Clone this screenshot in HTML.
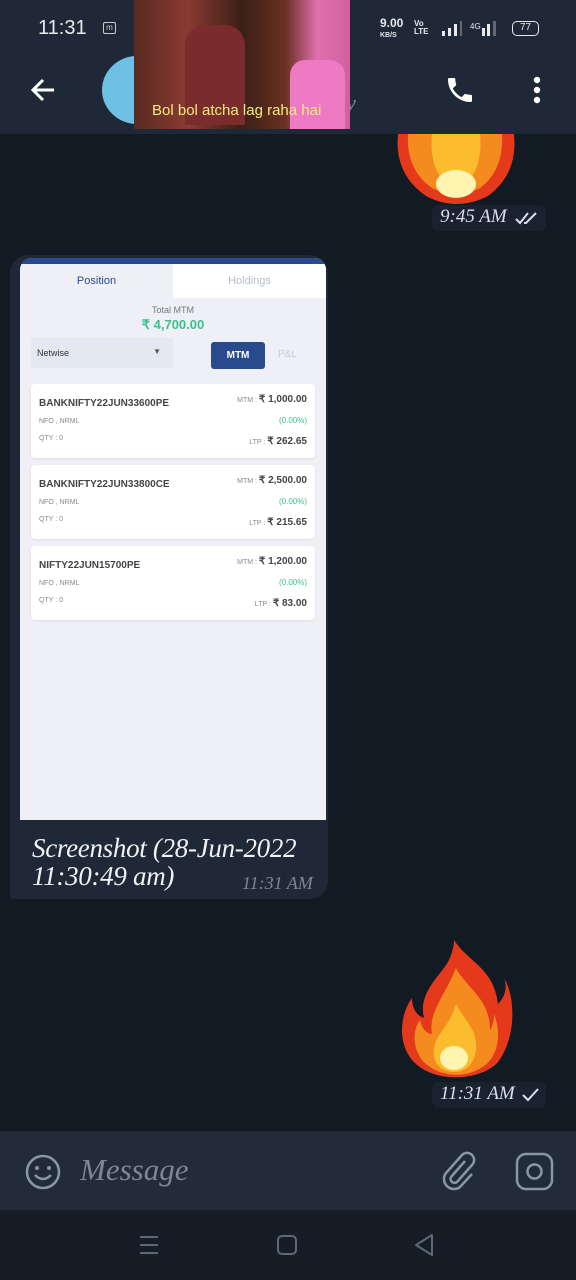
<!DOCTYPE html>
<html><head><style>
*{margin:0;padding:0;box-sizing:border-box}
body{width:576px;height:1280px;background:#121a24;font-family:"Liberation Sans",sans-serif;position:relative;overflow:hidden}
.abs{position:absolute}
.hdr{left:0;top:0;width:576px;height:134px;background:#1f2836}
.serif{font-family:"Liberation Serif",serif;font-style:italic}
.card{background:#fff;border-radius:4px;position:absolute;left:11px;width:284px;height:74px;box-shadow:0 1px 2px rgba(0,0,0,.08)}
.card .n{position:absolute;left:8px;top:14px;font-size:10px;font-weight:bold;color:#444}
.card .s{position:absolute;left:8px;font-size:7px;color:#888}
.card .r{position:absolute;right:8px;font-size:10px;font-weight:bold;color:#444;text-align:right}
.card .r small{font-size:7px;font-weight:normal;color:#888}
.card .g{position:absolute;right:8px;top:32px;font-size:8px;color:#3cc08c}
</style></head><body>
<div class="abs hdr"></div>
<div class="abs" style="left:38px;top:17px;color:#e8eaed;font-size:20px">11:31</div>
<div class="abs" style="left:103px;top:22px;width:13px;height:12px;border:1px solid #ccc;border-radius:2px;font-size:8px;color:#ccc;text-align:center;line-height:10px">m</div>
<div class="abs" style="left:380px;top:18px;color:#e8eaed;font-size:12px;font-weight:bold;line-height:10px">9.00<br><span style="font-size:7px">KB/S</span></div>
<div class="abs" style="left:414px;top:20px;color:#e8eaed;font-size:8px;font-weight:bold;line-height:8px">Vo<br>LTE</div>
<svg class="abs" style="left:440px;top:20px" width="60" height="18"><rect x="2" y="11" width="3" height="5" fill="#e8eaed"/><rect x="8" y="8" width="3" height="8" fill="#e8eaed"/><rect x="14" y="4" width="3" height="12" fill="#e8eaed"/><rect x="20" y="1" width="2" height="15" fill="#667"/><text x="30" y="9" font-size="8" fill="#e8eaed" font-family="Liberation Sans">4G</text><rect x="42" y="8" width="3" height="8" fill="#e8eaed"/><rect x="47" y="4" width="3" height="12" fill="#e8eaed"/><rect x="53" y="1" width="3" height="15" fill="#667"/></svg>
<div class="abs" style="left:512px;top:21px;width:27px;height:15px;border:1.5px solid #e8eaed;border-radius:5px;color:#e8eaed;font-size:10px;text-align:center;line-height:12px">77</div>
<svg class="abs" style="left:28px;top:76px" width="30" height="28"><path d="M26 14H5M15 4L5 14l10 10" stroke="#fff" stroke-width="3" fill="none"/></svg>
<div class="abs" style="left:102px;top:56px;width:70px;height:68px;border-radius:50%;background:#6ec1e4"></div>
<div class="abs serif" style="left:340px;top:90px;color:#7d8794;font-size:22px">ly</div>
<svg class="abs" style="left:444px;top:74px" width="32" height="32" viewBox="0 0 24 24"><path fill="#fff" d="M6.6 10.8c1.4 2.8 3.8 5.1 6.6 6.6l2.2-2.2c.3-.3.7-.4 1-.2 1.1.4 2.3.6 3.6.6.6 0 1 .4 1 1V20c0 .6-.4 1-1 1C10.6 21 3 13.4 3 4c0-.6.4-1 1-1h3.5c.6 0 1 .4 1 1 0 1.3.2 2.5.6 3.6.1.3 0 .7-.2 1z"/></svg>
<svg class="abs" style="left:530px;top:74px" width="14" height="32"><circle cx="7" cy="6" r="3.2" fill="#fff"/><circle cx="7" cy="16" r="3.2" fill="#fff"/><circle cx="7" cy="26" r="3.2" fill="#fff"/></svg>
<div class="abs" style="left:134px;top:0;width:216px;height:129px;background:linear-gradient(90deg,#5a2a22 0%,#8a3a30 25%,#3a2018 50%,#6a3020 70%,#e070b0 85%,#d060a0 100%)"></div>
<div class="abs" style="left:185px;top:25px;width:60px;height:100px;background:#7a2b2b;border-radius:20px 20px 0 0"></div>
<div class="abs" style="left:290px;top:60px;width:55px;height:69px;background:#ee7ac4;border-radius:15px 15px 0 0"></div>
<div class="abs" style="left:152px;top:102px;color:#f5eb80;font-size:15px">Bol bol atcha lag raha hai</div>
<svg class="abs" style="left:396px;top:134px" width="120" height="72" viewBox="0 0 120 72"><path d="M2 0Q-2 40 30 62Q60 78 92 62Q122 40 118 0Z" fill="#e5391b"/><path d="M12 0Q10 36 36 54Q60 66 84 54Q108 36 106 0Z" fill="#f58a1f"/><path d="M36 0Q32 40 60 58Q88 40 84 0Z" fill="#fbbd2e"/><ellipse cx="60" cy="50" rx="20" ry="14" fill="#fff4b0"/></svg>
<div class="abs" style="left:432px;top:205px;width:114px;height:26px;background:#1a2230;border-radius:6px"></div>
<div class="abs serif" style="left:440px;top:206px;color:#dde;font-size:19px">9:45 AM</div>
<svg class="abs" style="left:514px;top:210px" width="28" height="16"><path d="M2 9l4 4 8-10M10 13l2 0 10-10" stroke="#dde" stroke-width="2" fill="none"/></svg>
<div class="abs" style="left:10px;top:255px;width:318px;height:644px;background:#1f2836;border-radius:18px 18px 18px 4px"></div>
<div class="abs" style="left:20px;top:258px;width:306px;height:562px;background:#eef0f5;border-radius:12px 12px 0 0;overflow:hidden">
 <div class="abs" style="left:0;top:0;width:306px;height:6px;background:#2a4a8e"></div>
 <div class="abs" style="left:0;top:6px;width:153px;height:34px;background:#eef0f5;color:#2a4a8e;font-size:11px;text-align:center;line-height:34px">Position</div>
 <div class="abs" style="left:153px;top:6px;width:153px;height:34px;background:#fff;color:#b5bcc8;font-size:11px;text-align:center;line-height:34px">Holdings</div>
 <div class="abs" style="left:0;top:47px;width:306px;text-align:center;font-size:9px;color:#777">Total MTM</div>
 <div class="abs" style="left:0;top:59px;width:306px;text-align:center;font-size:13px;color:#3cc08c;font-weight:bold">₹ 4,700.00</div>
 <div class="abs" style="left:11px;top:80px;width:142px;height:30px;background:#e4e8f2;border-radius:3px;font-size:9px;color:#333;padding:10px 6px">Netwise<span style="position:absolute;right:12px;top:9px;font-size:8px;color:#555">▼</span></div>
 <div class="abs" style="left:191px;top:84px;width:54px;height:27px;background:#2a4a8e;border-radius:3px;color:#fff;font-size:10px;font-weight:bold;text-align:center;line-height:27px">MTM</div>
 <div class="abs" style="left:258px;top:91px;color:#c5ccd8;font-size:10px">P&amp;L</div>
 <div class="card" style="top:126px"><div class="n">BANKNIFTY22JUN33600PE</div><div class="s" style="top:34px">NFO , NRML</div><div class="s" style="top:51px">QTY : 0</div><div class="r" style="top:10px"><small>MTM : </small>₹ 1,000.00</div><div class="g">(0.00%)</div><div class="r" style="top:52px"><small>LTP : </small>₹ 262.65</div></div>
 <div class="card" style="top:207px"><div class="n">BANKNIFTY22JUN33800CE</div><div class="s" style="top:34px">NFO , NRML</div><div class="s" style="top:51px">QTY : 0</div><div class="r" style="top:10px"><small>MTM : </small>₹ 2,500.00</div><div class="g">(0.00%)</div><div class="r" style="top:52px"><small>LTP : </small>₹ 215.65</div></div>
 <div class="card" style="top:288px"><div class="n">NIFTY22JUN15700PE</div><div class="s" style="top:34px">NFO , NRML</div><div class="s" style="top:51px">QTY : 0</div><div class="r" style="top:10px"><small>MTM : </small>₹ 1,200.00</div><div class="g">(0.00%)</div><div class="r" style="top:52px"><small>LTP : </small>₹ 83.00</div></div>
</div>
<div class="abs serif" style="left:32px;top:834px;color:#f0f2f5;font-size:27px;line-height:28px;letter-spacing:-0.3px">Screenshot (28-Jun-2022<br>11:30:49 am)</div>
<div class="abs serif" style="left:242px;top:873px;color:#7d8794;font-size:18px">11:31 AM</div>
<svg class="abs" style="left:398px;top:938px" width="116" height="146" viewBox="0 0 116 146"><path d="M56 2C70 24 96 30 100 66C110 56 108 44 106 40C118 60 118 100 100 124C84 142 40 146 18 126C-2 108 2 76 14 60C14 72 20 78 26 80C20 56 40 40 50 24C54 16 56 8 56 2Z" fill="#e5391b"/><path d="M58 30C68 50 92 60 92 92C96 86 96 80 96 76C104 96 100 118 86 128C70 140 44 140 28 126C14 114 14 92 22 82C24 92 30 96 34 96C30 74 48 56 58 30Z" fill="#f58a1f"/><path d="M58 66C66 82 80 92 78 112C76 128 66 134 56 134C42 134 34 124 36 110C38 96 52 88 58 66Z" fill="#fbbd2e"/><ellipse cx="56" cy="120" rx="14" ry="12" fill="#fff4b0"/></svg>
<div class="abs" style="left:432px;top:1082px;width:114px;height:26px;background:#1a2230;border-radius:6px"></div>
<div class="abs serif" style="left:440px;top:1083px;color:#dde;font-size:19px">11:31 AM</div>
<svg class="abs" style="left:520px;top:1087px" width="22" height="16"><path d="M3 8l5 5 10-11" stroke="#dde" stroke-width="2" fill="none"/></svg>
<div class="abs" style="left:0;top:1131px;width:576px;height:79px;background:#222b38"></div>
<svg class="abs" style="left:22px;top:1151px" width="42" height="42"><circle cx="21" cy="21" r="16" stroke="#8a96a4" stroke-width="2.5" fill="none"/><circle cx="15" cy="17" r="2" fill="#8a96a4"/><circle cx="27" cy="17" r="2" fill="#8a96a4"/><path d="M13 24q8 8 16 0" stroke="#8a96a4" stroke-width="2.5" fill="none"/></svg>
<div class="abs serif" style="left:80px;top:1152px;color:#7d8794;font-size:31px">Message</div>
<svg class="abs" style="left:440px;top:1150px" width="40" height="42" viewBox="0 0 40 42"><path d="M28 14L14 30a4 4 0 0 0 6 5l15-17a7 7 0 0 0-10-10L9 26a10 10 0 0 0 14 14l12-13" stroke="#8a96a4" stroke-width="2.5" fill="none" transform="translate(-3,-3)"/></svg>
<svg class="abs" style="left:514px;top:1151px" width="42" height="42"><rect x="3" y="3" width="35" height="35" rx="9" stroke="#8a96a4" stroke-width="2.5" fill="none"/><circle cx="20.5" cy="20.5" r="7" stroke="#8a96a4" stroke-width="2.5" fill="none"/></svg>
<div class="abs" style="left:0;top:1210px;width:576px;height:70px;background:#171d27"></div>
<svg class="abs" style="left:138px;top:1234px" width="24" height="22"><path d="M2 3h18M2 11h18M2 19h18" stroke="#5e6876" stroke-width="2"/></svg>
<div class="abs" style="left:277px;top:1235px;width:20px;height:20px;border:2px solid #5e6876;border-radius:5px"></div>
<svg class="abs" style="left:412px;top:1233px" width="24" height="24"><path d="M20 2L4 12l16 10z" stroke="#5e6876" stroke-width="2" fill="none" stroke-linejoin="round"/></svg>
</body></html>
